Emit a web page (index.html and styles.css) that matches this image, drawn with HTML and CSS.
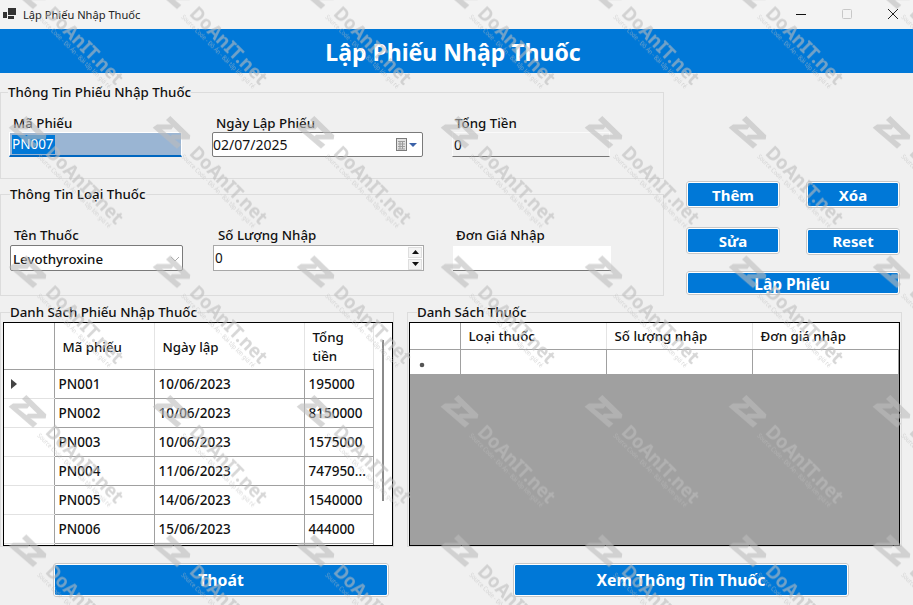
FILE: index.html
```html
<!DOCTYPE html>
<html lang="vi">
<head>
<meta charset="utf-8">
<title>Lập Phiếu Nhập Thuốc</title>
<link rel="stylesheet" href="styles.css">
</head>
<body>
<div class="window">
  <header class="titlebar">
    <svg class="app-icon" width="15" height="12" viewBox="0 0 15 12"><rect x="0" y="4" width="4" height="6" fill="#333"/><rect x="5" y="0" width="8" height="7" fill="#333"/><rect x="5" y="8" width="6" height="3" fill="#333"/></svg>
    <span class="title-text">Lập Phiếu Nhập Thuốc</span>
    <div class="win-controls">
      <svg width="12" height="12" viewBox="0 0 12 12"><path d="M1 6.500h10" stroke="#111" stroke-width="1"/></svg>
      <svg width="12" height="12" viewBox="0 0 12 12"><rect x="1.500" y="1.500" width="9" height="9" rx="1" fill="none" stroke="#c8c8c8"/></svg>
      <svg width="12" height="12" viewBox="0 0 12 12"><path d="M1 1l10 10M11 1L1 11" stroke="#222" stroke-width="1"/></svg>
    </div>
  </header>
  <h1 class="banner">Lập Phiếu Nhập Thuốc</h1>

  <main class="upper">
    <div class="forms">
      <fieldset class="group group-slip">
        <legend class="legend">Thông Tin Phiếu Nhập Thuốc</legend>
        <div class="fields fields-slip">
          <div class="field">
            <label class="label">Mã Phiếu</label>
            <div class="input input-selected"><span class="selection">PN007</span></div>
          </div>
          <div class="field">
            <label class="label">Ngày Lập Phiếu</label>
            <div class="input input-boxed input-date">
              <span>02/07/2025</span>
              <svg class="cal-icon" width="21" height="14" viewBox="0 0 21 14">
                <rect x="0.500" y="0.500" width="10" height="12" fill="#e2e2e2" stroke="#7c7c7c"/>
                <path d="M2 3.500h7M2 6h7M2 8.500h7M2 11h7M4 3v8M6.500 3v8" stroke="#9c9c9c" stroke-width="1"/>
                <path d="M13 5h8l-4 4z" fill="#3b62a8"/>
              </svg>
            </div>
          </div>
          <div class="field">
            <label class="label label-wide">Tổng Tiền</label>
            <div class="input input-readonly">0</div>
          </div>
        </div>
      </fieldset>

      <fieldset class="group group-drug">
        <legend class="legend legend-drug">Thông Tin Loại Thuốc</legend>
        <div class="fields fields-drug">
          <div class="field">
            <label class="label">Tên Thuốc</label>
            <div class="input input-boxed input-combo">
              <span>Levothyroxine</span>
              <svg width="10" height="6" viewBox="0 0 10 6"><path d="M1 1l4 4 4-4" fill="none" stroke="#a8a8a8"/></svg>
            </div>
          </div>
          <div class="field">
            <label class="label label-qty">Số Lượng Nhập</label>
            <div class="input input-spin">
              <span>0</span>
              <div class="spin-buttons">
                <span class="spin-btn"><svg width="7" height="4" viewBox="0 0 7 4"><path d="M0 4l3.500-4 3.500 4z" fill="#111"/></svg></span>
                <span class="spin-btn"><svg width="7" height="4" viewBox="0 0 7 4"><path d="M0 0l3.500 4 3.500-4z" fill="#111"/></svg></span>
              </div>
            </div>
          </div>
          <div class="field">
            <label class="label label-wide">Đơn Giá Nhập</label>
            <div class="input input-blank"></div>
          </div>
        </div>
      </fieldset>
    </div>

    <div class="actions">
      <button class="btn btn-start">Thêm</button>
      <button class="btn btn-start">Xóa</button>
      <button class="btn btn-start">Sửa</button>
      <button class="btn btn-end btn-reset">Reset</button>
      <button class="btn btn-span">Lập Phiếu</button>
    </div>
  </main>

  <section class="lower">
    <fieldset class="group group-list">
      <legend class="legend legend-list">Danh Sách Phiếu Nhập Thuốc</legend>
      <div class="grid-frame">
        <table class="data data-slips">
          <colgroup><col class="c-head"><col class="c-code"><col class="c-date"><col class="c-total"></colgroup>
          <thead>
            <tr><th class="rowhead-top"></th><th>Mã phiếu</th><th>Ngày lập</th><th>Tổng<br>tiền</th></tr>
          </thead>
          <tbody>
            <tr><td class="rowhead"><svg width="6" height="10" viewBox="0 0 6 10"><path d="M0 0l6 5-6 5z" fill="#444"/></svg></td><td>PN001</td><td>10/06/2023</td><td>195000</td></tr>
            <tr><td class="rowhead"></td><td>PN002</td><td>10/06/2023</td><td>8150000</td></tr>
            <tr><td class="rowhead"></td><td>PN003</td><td>10/06/2023</td><td>1575000</td></tr>
            <tr><td class="rowhead"></td><td>PN004</td><td>11/06/2023</td><td>747950...</td></tr>
            <tr><td class="rowhead"></td><td>PN005</td><td>14/06/2023</td><td>1540000</td></tr>
            <tr><td class="rowhead"></td><td>PN006</td><td>15/06/2023</td><td>444000</td></tr>
            <tr><td class="rowhead"></td><td></td><td></td><td></td></tr>
          </tbody>
        </table>
        <div class="scrolltrack"><div class="scrollthumb"></div></div>
      </div>
    </fieldset>

    <fieldset class="group group-items">
      <legend class="legend legend-list">Danh Sách Thuốc</legend>
      <div class="grid-frame grid-frame-gray">
        <table class="data data-items">
          <colgroup><col class="c-head"><col class="c-item"><col class="c-item"><col class="c-item"></colgroup>
          <thead>
            <tr class="row-short"><th class="rowhead-top"></th><th>Loại thuốc</th><th>Số lượng nhập</th><th>Đơn giá nhập</th></tr>
          </thead>
          <tbody>
            <tr class="row-short"><td class="rowhead rowhead-new"><svg width="6" height="6" viewBox="0 0 6 6"><circle cx="3" cy="3" r="2.300" fill="#555"/></svg></td><td></td><td></td><td></td></tr>
          </tbody>
        </table>
      </div>
    </fieldset>
  </section>

  <footer class="footer">
    <button class="btn btn-wide">Thoát</button>
    <button class="btn btn-wide">Xem Thông Tin Thuốc</button>
  </footer>

  <svg class="watermark" width="913" height="605" aria-hidden="true">
    <defs>
      <pattern id="wm" patternUnits="userSpaceOnUse" width="144" height="139.500" patternTransform="translate(0 106)">
        <g class="wm-ink">
          <g transform="translate(-2 0) scale(.3333)">
            <polygon points="72,42 85,30 145,88 143,100 78,100 90,86 118,86"/>
            <polygon points="32,65 45,55 100,55 88,70 60,70 118,116 105,128"/>
          </g>
          <text class="wm-name" transform="translate(44.500 48) rotate(45)" textLength="101" lengthAdjust="spacingAndGlyphs">DoAnIT.net</text>
          <text class="wm-sub" transform="translate(37 51) rotate(45)" textLength="101" lengthAdjust="spacingAndGlyphs">Source Code - Đồ Án - Bài tập lớn giá rẻ</text>
        </g>
      </pattern>
    </defs>
    <rect width="913" height="605" fill="url(#wm)"/>
  </svg>
</div>
</body>
</html>
```

FILE: styles.css
```css
* { box-sizing: border-box; }

html, body {
  margin: 0;
  padding: 0;
  background: #f0f0f0;
}

body {
  font-family: "Noto Sans", "Open Sans", sans-serif;
  font-size: 13px;
  color: #111;
  overflow: hidden;
}

.window {
  position: relative;
  width: 913px;
  height: 605px;
  overflow: hidden;
  background: #f0f0f0;
}

/* title bar */
.titlebar {
  display: flex;
  align-items: center;
  height: 29px;
  padding-left: 3px;
  background: #f3f3f3;
}
.app-icon { margin-top: -1px; }
.title-text {
  margin-left: 5px;
  font-size: 11.100px;
  color: #222;
}
.win-controls {
  display: flex;
  gap: 34px;
  margin-left: auto;
  margin-right: 14px;
  margin-top: -2px;
}

.banner {
  margin: 0;
  height: 44px;
  padding-right: 7px;
  background: #0078d7;
  color: #fff;
  font-size: 23px;
  font-weight: 700;
  line-height: 47px;
  text-align: center;
}

/* upper area */
.upper {
  display: flex;
  padding-top: 10px;
}
.forms {
  width: 664px;
  display: flex;
  flex-direction: column;
  gap: 6px;
}

.group {
  margin: 0;
  padding: 0;
  min-width: 0;
  border: 1px solid #dcdcdc;
}
.legend {
  margin-left: 7px;
  padding: 0;
  height: 18px;
  font-size: 13.300px;
  font-weight: 500;
  line-height: 18px;
  white-space: nowrap;
}
.legend-drug, .legend-list { margin-left: 9px; }

.group-slip { height: 96px; }
.group-drug { height: 111px; }

.fields {
  display: grid;
  grid-template-columns: 203px 240px 158px;
}
.fields-slip { padding: 13px 0 0 8px; }
.fields-drug { padding: 23px 0 0 9px; }
.fields-drug .label { height: 19px; }

.field { display: flex; flex-direction: column; }
.label {
  height: 18px;
  padding-left: 4px;
  font-size: 13.300px;
  font-weight: 500;
  line-height: 18px;
  white-space: nowrap;
}
.label-wide { padding-left: 3px; }
.label-qty { padding-left: 5px; }

.input {
  height: 25px;
  display: flex;
  align-items: center;
  font-size: 13.500px;
  white-space: nowrap;
}
.field:nth-child(1) .input { width: 173px; }
.field:nth-child(2) .input { width: 211px; }
.field:nth-child(3) .input { width: 158px; }

.input-selected {
  padding: 1px 0 0 2px;
  border: 1px solid #fff;
  border-bottom: 2px solid #0067c0;
  background: #9ab5d3;
}
.selection {
  background: #0078d7;
  color: #fff;
  padding-right: 1px;
  line-height: 19px;
}
.input-boxed {
  border: 1px solid #7a7a7a;
  border-radius: 2px;
  background: #fff;
  justify-content: space-between;
}
.input-date { font-size: 14px; }
.cal-icon { margin: 0 5px 0 0; }
.input-readonly {
  padding-left: 1px;
  border: 1px solid #fafafa;
  border-bottom: 1px solid #777;
  background: #f0f0f0;
}
.input-combo {
  height: 26px;
  padding: 1px 2px 0 2px;
  font-size: 13.300px;
  font-weight: 500;
}
.input-spin {
  height: 26px;
  padding-left: 1px;
  border: 1px solid #a8a8a8;
  background: #fff;
  justify-content: space-between;
}
.spin-buttons {
  display: flex;
  flex-direction: column;
  gap: 1px;
  margin-right: 1px;
}
.spin-btn {
  display: flex;
  align-items: center;
  justify-content: center;
  width: 14px;
  height: 11px;
  background: #f4f4f4;
  border: 1px solid #dedede;
}
.input-blank {
  margin-top: 1px;
  background: #fff;
  border-bottom: 1px solid #777;
}

/* buttons */
.actions {
  display: grid;
  grid-template-columns: 94px 94px;
  grid-template-rows: 30px 28px 24px;
  column-gap: 26px;
  row-gap: 16px;
  margin: 98px 0 0 22px;
  align-self: flex-start;
}
.btn {
  padding: 1px 0 0;
  border: 2px solid #fff;
  border-radius: 3px;
  outline: 1px solid #c8c8c8;
  outline-offset: -1px;
  background: #0078d7;
  background-clip: padding-box;
  color: #fff;
  font-family: inherit;
  font-size: 15px;
  font-weight: 700;
  line-height: 1;
}
.btn-start { height: 27px; align-self: start; }
.btn-end { height: 27px; align-self: end; padding-top: 0; }
.btn-reset { font-size: 14.800px; }
.btn-span { grid-column: 1 / 3; overflow: hidden; padding: 3px 2px 0 0; font-size: 15.500px; }
.btn-wide { width: 336px; height: 34px; font-size: 15.800px; }

/* lists */
.lower {
  display: flex;
  gap: 13px;
  margin-top: 7px;
}
.group-list { width: 394px; height: 244px; }
.group-items { width: 495px; height: 244px; }

.grid-frame {
  display: flex;
  height: 224px;
  margin: 0 0 0 2px;
  border: 1px solid #000;
  background: #fff;
  overflow: hidden;
}
.group-list .grid-frame { width: 390px; margin-top: 1px; }
.group-items .grid-frame { width: 491px; margin-top: 1px; margin-left: 1px; }
.grid-frame-gray { background: #a0a0a0; }

.data {
  table-layout: fixed;
  border-collapse: collapse;
  font-size: 13.500px;
  font-weight: 500;
  flex: none;
  align-self: flex-start;
  background: #fff;
}
.data-slips { width: 369px; }
.data-items { width: 488px; }
.c-head { width: 50px; }
.c-code { width: 100px; }
.c-date { width: 150px; }
.c-total { width: 69px; }
.c-item { width: 146px; }

.data th {
  height: 46px;
  padding: 3px 8px 0;
  border-right: 1px solid #e4e4e4;
  border-bottom: 1px solid #a0a0a0;
  font-size: 13.300px;
  font-weight: 500;
  line-height: 19px;
  text-align: left;
}
.data th.rowhead-top { border-right: 1px solid #a0a0a0; }
.data td {
  height: 29px;
  padding: 0 4px;
  border-right: 1px solid #a0a0a0;
  border-bottom: 1px solid #a0a0a0;
  white-space: nowrap;
}
.data td.rowhead {
  padding-left: 7px;
  border-bottom-color: #e2e2e2;
  line-height: 0;
}
.data-items .row-short th { height: 26px; padding-top: 1px; }
.data-items .row-short td { height: 25px; border-bottom: 0; }
.data-items td.rowhead-new { padding-left: 9px; padding-top: 6px; }

.scrolltrack {
  flex: 1;
  padding: 17px 0 0 8px;
}
.scrollthumb {
  width: 2px;
  height: 161px;
  background: #8a8a8a;
}

.footer {
  display: flex;
  gap: 124px;
  padding: 16px 0 0 53px;
}

/* watermark */
.watermark {
  position: absolute;
  left: 0;
  top: 0;
  pointer-events: none;
}
.wm-ink {
  fill: #bcbcbc;
  opacity: .6;
  font-family: "Noto Sans", sans-serif;
}
.wm-name { font-size: 19px; font-weight: 700; }
.wm-sub { font-size: 6.500px; }
```
